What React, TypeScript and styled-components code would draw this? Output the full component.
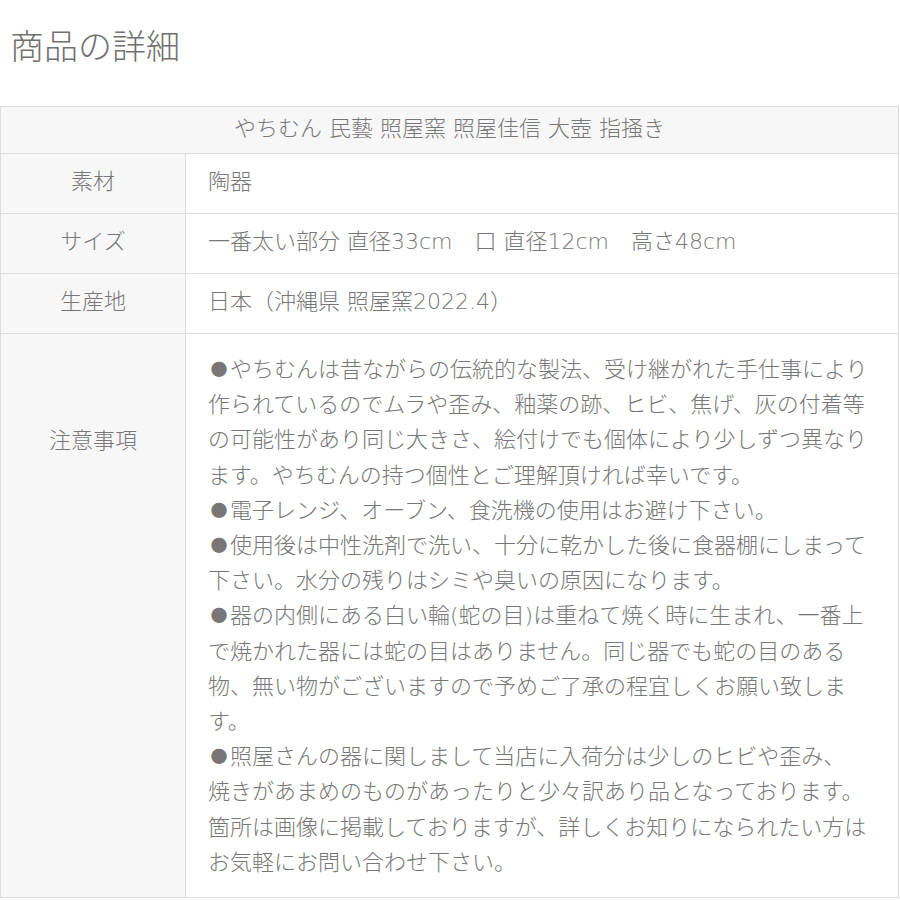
import { createGlobalStyle } from 'styled-components';
import styled from 'styled-components';

const GlobalStyle = createGlobalStyle`
  body {
    margin: 0;
    background: #fff;
    font-family: "DejaVu Sans", "Noto Sans CJK JP", sans-serif;
    color: #777;
  }
`;

const Page = styled.div`
  width: 900px;
`;

const Title = styled.h2`
  margin: 20px 0 36px 10px;
  font-family: "Noto Sans CJK JP", sans-serif;
  font-size: 34px;
  line-height: 50px;
  font-weight: 300;
  color: #707070;
`;

const Table = styled.table`
  width: 899px;
  border-collapse: collapse;
  table-layout: fixed;
  font-size: 22px;
  line-height: 35px;
  font-weight: 300;
`;

const HeadCell = styled.th`
  background: #f7f7f7;
  border: 1px solid #ddd;
  padding: 4px 10px 7px;
  font-weight: 300;
  text-align: center;
  color: #777;
`;

const Label = styled.th<{ $top?: boolean }>`
  background: #f7f7f7;
  border: 1px solid #ddd;
  padding: ${({ $top }) => ($top ? '89px 0 0' : '0 0 4px')};
  font-weight: 300;
  text-align: center;
  vertical-align: ${({ $top }) => ($top ? 'top' : 'middle')};
  color: #777;
`;

const Cell = styled.td<{ $tall?: boolean }>`
  border: 1px solid #ddd;
  padding: ${({ $tall }) => ($tall ? '18px 22px 17px 22px' : '10px 22px 14px 22px')};
  line-height: ${({ $tall }) => ($tall ? '35.2px' : '35px')};
  color: #777;
  white-space: nowrap;
`;

const Line = styled.span`
  display: block;
`;

const Bullet = styled.span`
  display: inline-block;
  width: 22px;
  font-size: 17px;
  line-height: 0;
  text-align: center;
  vertical-align: 1px;
`;

type Row = {
  label: string;
  value: string;
};

const rows: Row[] = [
  { label: '素材', value: '陶器' },
  { label: 'サイズ', value: '一番太い部分 直径33cm　口 直径12cm　高さ48cm' },
  { label: '生産地', value: '日本（沖縄県 照屋窯2022.4）' },
];

// lines as they break in the original
const notes: string[] = [
  '●やちむんは昔ながらの伝統的な製法、受け継がれた手仕事により',
  '作られているのでムラや歪み、釉薬の跡、ヒビ、焦げ、灰の付着等',
  'の可能性があり同じ大きさ、絵付けでも個体により少しずつ異なり',
  'ます。やちむんの持つ個性とご理解頂ければ幸いです。',
  '●電子レンジ、オーブン、食洗機の使用はお避け下さい。',
  '●使用後は中性洗剤で洗い、十分に乾かした後に食器棚にしまって',
  '下さい。水分の残りはシミや臭いの原因になります。',
  '●器の内側にある白い輪(蛇の目)は重ねて焼く時に生まれ、一番上',
  'で焼かれた器には蛇の目はありません。同じ器でも蛇の目のある',
  '物、無い物がございますので予めご了承の程宜しくお願い致しま',
  'す。',
  '●照屋さんの器に関しまして当店に入荷分は少しのヒビや歪み、',
  '焼きがあまめのものがあったりと少々訳あり品となっております。',
  '箇所は画像に掲載しておりますが、詳しくお知りになられたい方は',
  'お気軽にお問い合わせ下さい。',
];

export default function App() {
  return (
    <Page>
      <GlobalStyle />
      <Title>商品の詳細</Title>
      <Table>
        <colgroup>
          <col style={{ width: 185 }} />
          <col />
        </colgroup>
        <tbody>
          <tr>
            <HeadCell colSpan={2}>やちむん 民藝 照屋窯 照屋佳信 大壺 指掻き</HeadCell>
          </tr>
          {rows.map((row) => (
            <tr key={row.label}>
              <Label>{row.label}</Label>
              <Cell>{row.value}</Cell>
            </tr>
          ))}
          <tr>
            <Label $top>注意事項</Label>
            <Cell $tall>
              {notes.map((line, i) =>
                line.startsWith('●') ? (
                  <Line key={i}>
                    <Bullet>●</Bullet>
                    {line.slice(1)}
                  </Line>
                ) : (
                  <Line key={i}>{line}</Line>
                )
              )}
            </Cell>
          </tr>
        </tbody>
      </Table>
    </Page>
  );
}
